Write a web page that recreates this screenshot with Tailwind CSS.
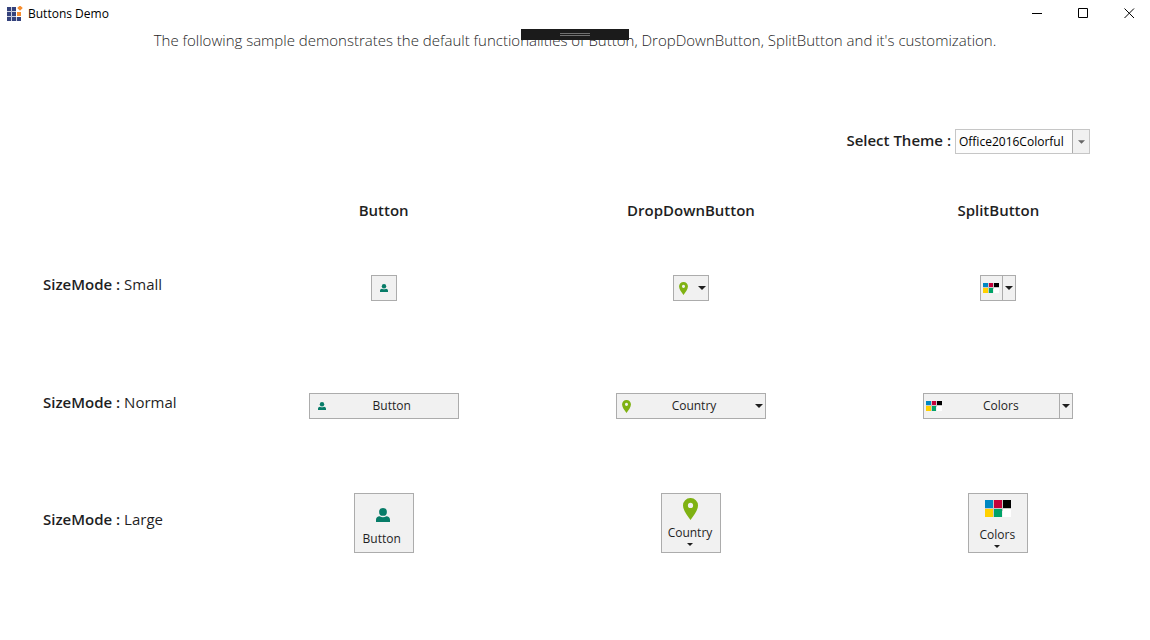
<!DOCTYPE html>
<html lang="en">
<head>
<meta charset="utf-8">
<title>Buttons Demo</title>
<script src="https://cdn.jsdelivr.net/npm/@tailwindcss/browser@4"></script>
</head>
<body class="min-h-screen overflow-x-hidden bg-white font-['Open_Sans','Noto_Sans',sans-serif] text-[#1f1f1f]">
<svg class="hidden" aria-hidden="true">
  <symbol id="person" viewBox="0 0 14 14"><circle cx="7" cy="3.9" r="3.9" fill="#077c68"/><path d="M0 14v-2.2C0 9.700 1.500 8.300 3.600 8.300c2 1.300 4.800 1.300 6.800 0 2.100 0 3.600 1.400 3.600 3.500V14z" fill="#077c68"/></symbol>
  <symbol id="pin" viewBox="0 0 15 22"><path fill-rule="evenodd" d="M7.500 0A7.400 7.400 0 0 0 0 7.500C0 12 4 17 7.500 22 11 17 15 12 15 7.500A7.400 7.400 0 0 0 7.500 0zm0 4.800a2.600 2.600 0 1 1 0 5.200 2.600 2.600 0 0 1 0-5.200z" fill="#7fb213"/></symbol>
  <symbol id="tiles" viewBox="0 0 26 17"><path fill="#c8c8c8" d="M8 0h1v17H8zM17 0h1v9h-1zM0 8h18v1H0zM17 8h9v1h-9zM17 9h1v2h-1z"/><path fill="#0087c2" d="M0 0h8v8H0z"/><path fill="#c4003a" d="M9 0h8v8H9z"/><path fill="#000" d="M18 0h8v8h-8z"/><path fill="#ffd100" d="M0 9h8v8H0z"/><path fill="#00a368" d="M9 9h8v8H9z"/><path fill="#fff" d="M18 9h8v8h-8z"/></symbol>
  <symbol id="tiles-small" viewBox="0 0 16 10"><path fill="#c8c8c8" d="M5 0h1v10H5zM10 0h1v6h-1zM0 4h16v1H0z"/><path fill="#0087c2" d="M0 0h5v4H0z"/><path fill="#c4003a" d="M6 0h4v4H6z"/><path fill="#000" d="M11 0h5v4h-5z"/><path fill="#ffd100" d="M0 5h5v5H0z"/><path fill="#00a368" d="M6 5h4v5H6z"/><path fill="#fff" d="M11 5h5v5h-5z"/></symbol>
  <symbol id="arrow" viewBox="0 0 8 4"><path d="M0 0h8L4 4z" fill="currentColor"/></symbol>
</svg>

<header class="flex h-7 items-center">
  <svg class="ml-[7px] h-4 w-4" viewBox="0 0 16 16" aria-hidden="true"><path fill="#34427c" d="M0 1h4v4H0zM5 1h4v4H5zM0 6h4v4H0zM5 6h4v4H5zM0 11h4v4H0zM5 11h4v4H5zM10 11h4v4h-4z"/><path fill="#9aa1bf" d="M4 1h.5v14H4zM9 11h.5v4H9zM0 5h9v.5H0zM0 10h9v.5H0z"/><path fill="#f68d2e" d="M10 6h4v4h-4zM13-.5l2.800 2.500L13 4.800l-2.800-2.800z"/></svg>
  <h1 class="ml-[5px] grow text-xs text-black">Buttons Demo</h1>
  <div class="-mr-0.5 flex pb-0.5 text-black">
    <button type="button" aria-label="Minimize" class="flex h-[26px] w-[46px] items-center justify-center"><svg class="h-[11px] w-[11px]" viewBox="0 0 11 11"><path d="M0 5h10v1H0z"/></svg></button>
    <button type="button" aria-label="Maximize" class="flex h-[26px] w-[46px] items-center justify-center"><svg class="h-[11px] w-[11px]" viewBox="0 0 11 11"><path d="M.5.5h9v9h-9z" fill="none" stroke="#000"/></svg></button>
    <button type="button" aria-label="Close" class="flex h-[26px] w-[46px] items-center justify-center"><svg class="h-[11px] w-[11px]" viewBox="0 0 11 11"><path d="M.5.5l9.500 9.500M10 .5L.5 10" fill="none" stroke="#000"/></svg></button>
  </div>
</header>

<main>
  <div class="relative">
    <p class="text-center text-[15px]/6 font-light">The following sample demonstrates the default functionalities of Button, DropDownButton, SplitButton and it's customization.</p>
    <div class="absolute top-px left-1/2 flex h-[11px] w-[108px] -translate-x-1/2 justify-center bg-[#1b1b1b] pt-1"><span class="h-[3px] w-[30px] border-y border-[#707070]"></span></div>
  </div>

  <div class="mt-[77px] mr-[60px] flex h-[25px] items-center justify-end gap-1">
    <label for="theme" class="pb-1 text-[15px]/6 font-semibold">Select Theme :</label>
    <div class="relative w-[135px]">
      <select id="theme" class="block h-[25px] w-full appearance-none border border-[#c6c6c6] bg-[#fdfdfd] pr-5 pl-[3px] text-xs text-black"><option>Office2016Colorful</option></select>
      <span class="pointer-events-none absolute inset-y-px right-px flex w-[17px] items-center justify-center border-l border-[#ababab] bg-[#f1f1f1] text-[#666666]"><svg class="h-1 w-[7px]"><use href="#arrow"/></svg></span>
    </div>
  </div>

  <section class="-mr-0.5 grid grid-cols-[230px_repeat(3,1fr)] grid-rows-[75px_118px_118px_116px] items-center justify-items-center text-xs text-[#1f1f1f]">
    <h2 class="col-start-2 mt-9 text-[15px]/6 font-semibold">Button</h2>
    <h2 class="mt-9 text-[15px]/6 font-semibold">DropDownButton</h2>
    <h2 class="mt-9 text-[15px]/6 font-semibold">SplitButton</h2>

    <h3 class="mb-2 ml-[43px] justify-self-start text-[15px]/6"><span class="font-semibold">SizeMode :</span> Small</h3>
    <button type="button" aria-label="Button" class="flex h-[26px] w-[26px] items-center justify-center border border-[#acacac] bg-[#f1f1f1]"><svg class="h-2 w-2"><use href="#person"/></svg></button>
    <button type="button" aria-label="Country" class="flex h-[26px] w-9 items-center justify-between border border-[#acacac] bg-[#f1f1f1] pr-0.5 pl-[5px]"><svg class="h-[13px] w-[9px]"><use href="#pin"/></svg><svg class="h-1 w-2"><use href="#arrow"/></svg></button>
    <div class="flex h-[26px] w-9 border border-[#acacac] bg-[#f1f1f1]">
      <button type="button" aria-label="Colors" class="flex grow items-center pl-0.5"><svg class="h-2.5 w-4"><use href="#tiles-small"/></svg></button>
      <button type="button" aria-label="More colors" class="flex w-[13px] items-center justify-center border-l border-[#acacac]"><svg class="h-1 w-2"><use href="#arrow"/></svg></button>
    </div>

    <h3 class="mb-2 ml-[43px] justify-self-start text-[15px]/6"><span class="font-semibold">SizeMode :</span> Normal</h3>
    <button type="button" class="flex h-[26px] w-[150px] items-center border border-[#acacac] bg-[#f1f1f1] pl-2"><svg class="h-2 w-2"><use href="#person"/></svg><span class="grow text-center">Button</span></button>
    <button type="button" class="flex h-[26px] w-[150px] items-center border border-[#acacac] bg-[#f1f1f1] pr-0.5 pl-[5px]"><svg class="h-[13px] w-[9px]"><use href="#pin"/></svg><span class="grow pl-0.5 text-center">Country</span><svg class="h-1 w-2"><use href="#arrow"/></svg></button>
    <div class="flex h-[26px] w-[150px] border border-[#acacac] bg-[#f1f1f1]">
      <button type="button" class="flex grow items-center pl-0.5"><svg class="h-2.5 w-4"><use href="#tiles-small"/></svg><span class="grow text-center">Colors</span></button>
      <button type="button" aria-label="More colors" class="flex w-[13px] items-center justify-center border-l border-[#acacac]"><svg class="h-1 w-2"><use href="#arrow"/></svg></button>
    </div>

    <h3 class="mb-2 ml-[43px] justify-self-start text-[15px]/6"><span class="font-semibold">SizeMode :</span> Large</h3>
    <button type="button" class="flex h-[60px] w-[60px] flex-col items-center border border-[#acacac] bg-[#f1f1f1] pt-3.5 pr-0.5"><svg class="h-3.5 w-3.5"><use href="#person"/></svg><span class="mt-[9px] pr-0.5">Button</span></button>
    <button type="button" class="flex h-[60px] w-[60px] flex-col items-center border border-[#acacac] bg-[#f1f1f1] pt-1"><svg class="h-[22px] w-[15px]"><use href="#pin"/></svg><span class="mt-[5px] pr-0.5">Country</span><svg class="mt-0.5 mr-0.5 h-[3px] w-1.5"><use href="#arrow"/></svg></button>
    <button type="button" class="flex h-[60px] w-[60px] flex-col items-center border border-[#acacac] bg-[#f1f1f1] pt-1.5"><svg class="h-[17px] w-[26px]"><use href="#tiles"/></svg><span class="mt-2.5 pr-0.5">Colors</span><svg class="mt-0.5 mr-0.5 h-[3px] w-1.5"><use href="#arrow"/></svg></button>
  </section>
</main>
</body>
</html>
